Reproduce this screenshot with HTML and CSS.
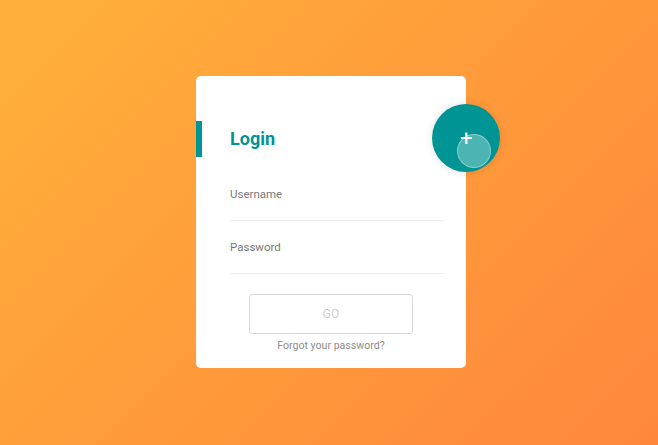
FILE: index.html
```html
<!DOCTYPE html>
<html lang="en">
<head>
    <meta charset="UTF-8">
    <meta name="viewport" content="width=device-width, initial-scale=1.0">
    <title>Login</title>
    <link rel="stylesheet" href="styles.css">
</head>
<body>
    <!-- Login card -->
    <div class="card">
        <div class="card-title">
            <h1>Login</h1>
        </div>
        <form class="form">
            <div class="field">
                <label for="username">Username</label>
            </div>
            <div class="field">
                <label for="password">Password</label>
            </div>
            <button type="button" class="btn">GO</button>
            <a href="#" class="forgot">Forgot your password?</a>
        </form>

        <!-- Floating toggle -->
        <div class="toggle">
            <span class="plus">+</span>
            <span class="ripple"></span>
        </div>
    </div>
</body>
</html>
```

FILE: styles.css
```css
/* Base */
body {
    font-family: 'Roboto', 'Liberation Sans', sans-serif;
    background: linear-gradient(135deg, #FFB23A 0%, #FF9B3B 50%, #FF873C 100%);
    margin: 0;
    padding: 0;
    min-height: 445px;
    overflow: hidden;
}

/* Card */
.card {
    position: relative;
    width: 270px;
    height: 292px;
    margin: 76px 0 0 196px;
    background: #FFFFFF;
    border-radius: 5px;
    box-sizing: border-box;
    padding-top: 45px;
}

.card-title {
    border-left: 6px solid #009494;
    height: 36px;
    display: flex;
    align-items: center;
    padding-left: 28px;
}

.card-title h1 {
    margin: 0;
    font-size: 18px;
    font-weight: 700;
    color: #009494;
    line-height: 1;
}

/* Form */
.form {
    display: flex;
    flex-direction: column;
    padding: 11px 22px 0 34px;
}

.field {
    padding: 18px 0;
    border-bottom: 1px solid #EDEDED;
}

.field label {
    display: block;
    font-size: 11.5px;
    color: #7A7A7A;
    line-height: 16px;
}

.btn {
    align-self: center;
    width: 164px;
    height: 40px;
    margin: 20px 0 0 -12px;
    background: #FFFFFF;
    border: 1px solid #D8D8D8;
    border-radius: 3px;
    color: #CFCFCF;
    font-family: inherit;
    font-size: 12px;
    cursor: pointer;
}

.forgot {
    align-self: center;
    margin: 5px 0 0 -12px;
    font-size: 10.6px;
    color: #8E8E8E;
    text-decoration: none;
}

/* Floating toggle */
.toggle {
    position: absolute;
    top: 28px;
    right: -34px;
    width: 68px;
    height: 68px;
    border-radius: 50%;
    background: #009494;
    box-shadow: 0 0 8px rgba(0, 0, 0, 0.12);
    overflow: hidden;
}

.plus {
    position: absolute;
    top: 24px;
    left: 28px;
    color: #FFFFFF;
    font-size: 22px;
    line-height: 1;
    font-weight: 400;
}

.ripple {
    position: absolute;
    top: 30px;
    left: 25px;
    width: 34px;
    height: 34px;
    border-radius: 50%;
    background: rgba(255, 255, 255, 0.3);
    border: 1px solid rgba(255, 255, 255, 0.35);
    box-sizing: border-box;
}
```
